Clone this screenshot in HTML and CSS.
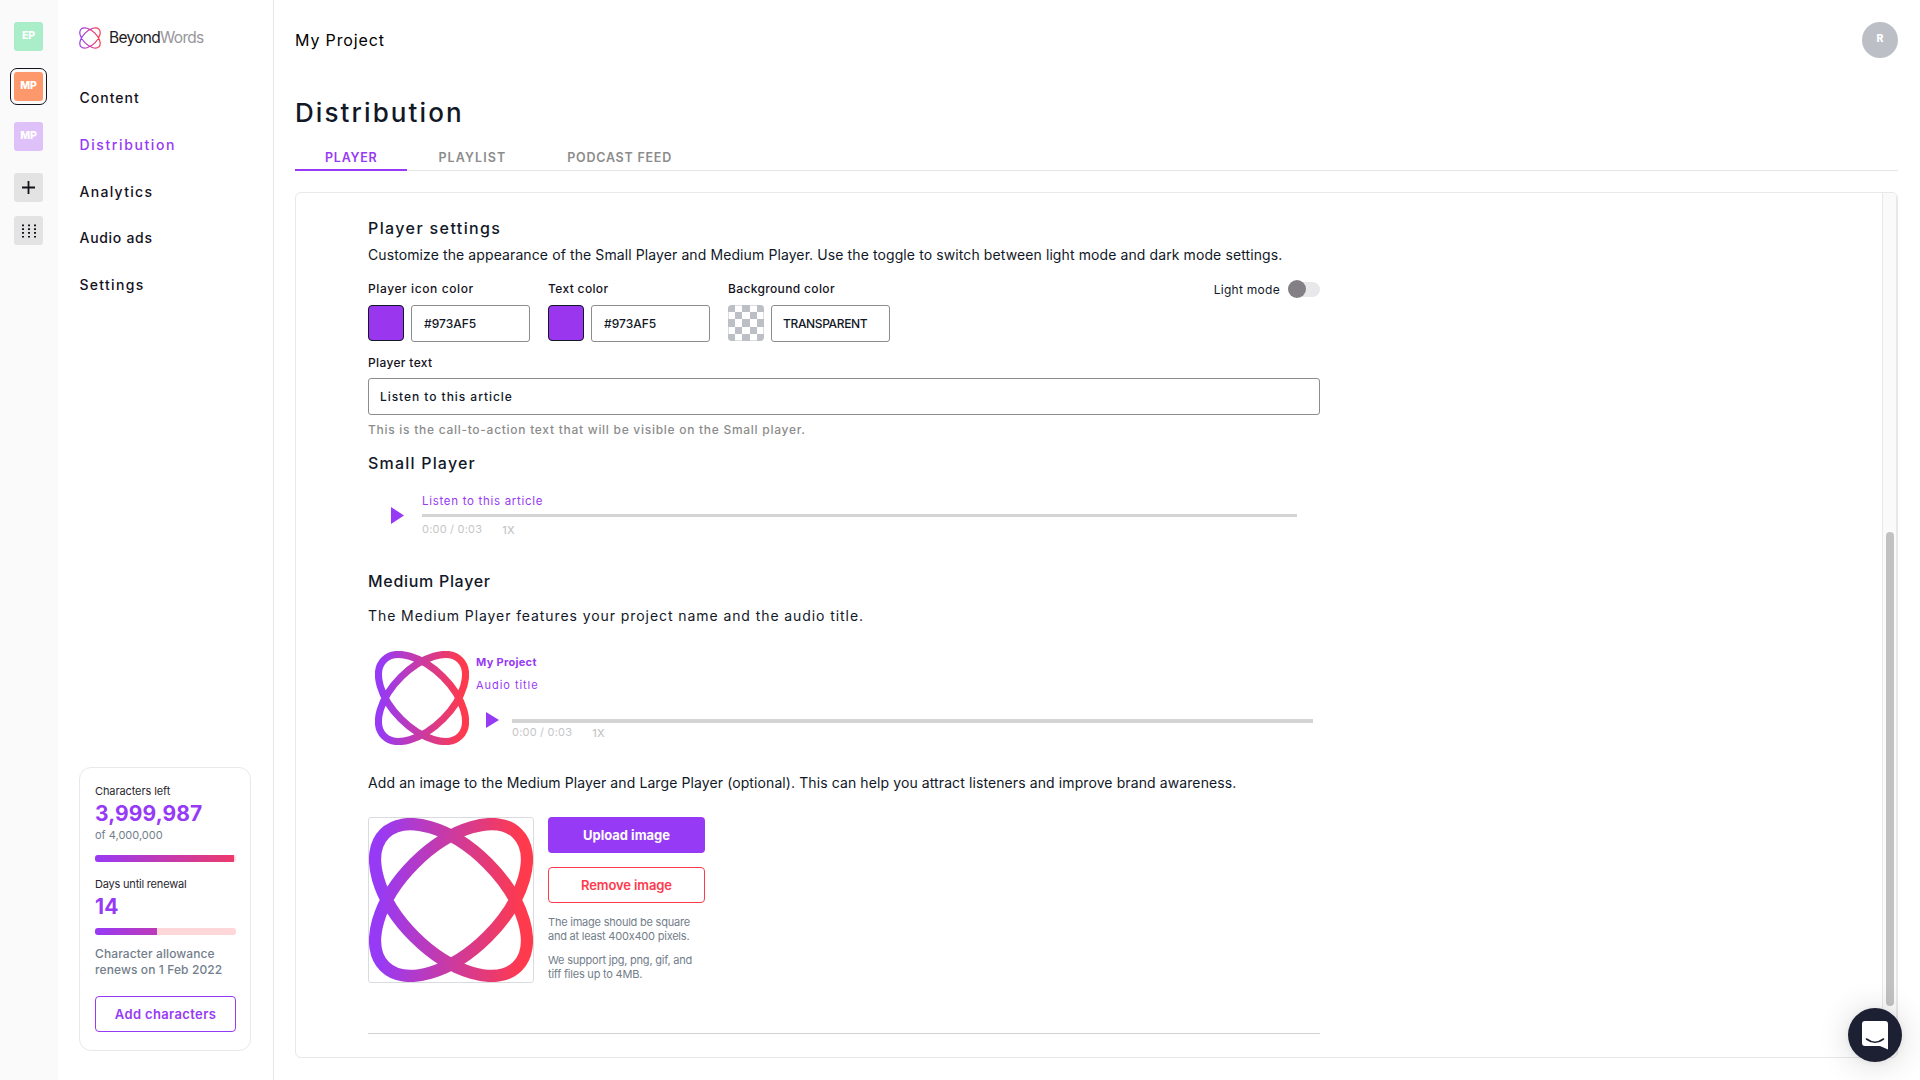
FILE: index.html
```html
<!DOCTYPE html>
<html lang="en">
<head>
  <meta charset="UTF-8" />
  <meta name="viewport" content="width=device-width, initial-scale=1.0" />
  <title>Distribution - BeyondWords</title>
  <link rel="stylesheet" href="styles.css">
</head>
<body>
  <svg class="defs" width="0" height="0">
    <linearGradient id="brand" gradientUnits="userSpaceOnUse" x1="10" y1="0" x2="154" y2="0">
      <stop offset="0" stop-color="#973af5" />
      <stop offset="1" stop-color="#ff3a4c" />
    </linearGradient>
    <symbol id="orbit" viewBox="0 0 164 164">
      <path d="M15.6 15.6A93.9 51.9 45 0 1 148.4 148.4A93.9 51.9 45 0 1 15.6 15.6ZM148.4 15.6A93.9 51.9 135 0 1 15.6 148.4A93.9 51.9 135 0 1 148.4 15.6Z" fill="none" stroke="url(#brand)" />
    </symbol>
  </svg>

  <div class="app">
    <aside class="rail">
      <a class="tile green">EP</a>
      <a class="tile orange active">MP</a>
      <a class="tile lilac">MP</a>
      <a class="tile grey add">
        <svg width="13" height="13" viewBox="0 0 13 13"><path d="M6.5 0V13M0 6.5H13" stroke="#15121d" stroke-width="1.8" /></svg>
      </a>
      <a class="tile grey apps">
        <svg width="14" height="14" viewBox="0 0 14 14"><path d="M1 .5V14M7 .5V14M13 .5V14" stroke="#15121d" stroke-width="2" stroke-dasharray="1.7 2.1" /></svg>
      </a>
    </aside>

    <nav class="sidebar">
      <div class="brand">
        <svg class="brand-icon" width="22" height="22"><use href="#orbit" /></svg>
        <span class="brand-name">Beyond<span class="light">Words</span></span>
      </div>
      <ul class="menu">
        <li><a class="content-link">Content</a></li>
        <li><a class="current">Distribution</a></li>
        <li><a>Analytics</a></li>
        <li><a class="ads-link">Audio ads</a></li>
        <li><a>Settings</a></li>
      </ul>

      <div class="usage">
        <div class="usage-label">Characters left</div>
        <div class="usage-value">3,999,987</div>
        <div class="usage-total">of 4,000,000</div>
        <div class="bar"><div class="bar-fill" style="width: 98.6%"></div></div>
        <div class="usage-label days">Days until renewal</div>
        <div class="usage-value">14</div>
        <div class="bar bar-days"><div class="bar-fill" style="width: 44%"></div></div>
        <p class="usage-note">Character allowance<br>renews on 1 Feb 2022</p>
        <button class="btn outline">Add characters</button>
      </div>
    </nav>

    <main class="main">
      <header class="topbar">
        <span class="project">My Project</span>
        <span class="avatar">R</span>
      </header>
      <h1>Distribution</h1>
      <div class="tabs">
        <a class="tab selected">PLAYER</a>
        <a class="tab playlist">PLAYLIST</a>
        <a class="tab">PODCAST FEED</a>
      </div>

      <section class="panel">
        <div class="content">
          <h2>Player settings</h2>
          <p class="intro">Customize the appearance of the Small Player and Medium Player. Use the toggle to switch between light mode and dark mode settings.</p>

          <div class="colors">
            <div class="color">
              <label class="icon-label">Player icon color</label>
              <div class="color-row"><span class="swatch"></span><input type="text" value="#973AF5"></div>
            </div>
            <div class="color">
              <label>Text color</label>
              <div class="color-row"><span class="swatch"></span><input type="text" value="#973AF5"></div>
            </div>
            <div class="color">
              <label>Background color</label>
              <div class="color-row">
                <span class="swatch clear">
                  <svg width="36" height="36" viewBox="0 0 5 5" shape-rendering="crispEdges"><path d="M0 .5H5M0 2.5H5M0 4.5H5" stroke="#bdbfc7" stroke-dasharray="1 1" /><path d="M1 1.5H5M1 3.5H5" stroke="#bdbfc7" stroke-dasharray="1 1" /></svg>
                </span>
                <input class="none" type="text" value="TRANSPARENT">
              </div>
            </div>
            <div class="mode">
              <span class="mode-label">Light mode</span>
              <span class="toggle"><span class="knob"></span></span>
            </div>
          </div>

          <label>Player text</label>
          <input class="wide" type="text" value="Listen to this article">
          <p class="hint">This is the call-to-action text that will be visible on the Small player.</p>

          <h2 class="small-title">Small Player</h2>
          <div class="player small">
            <svg class="play" width="13" height="17" viewBox="0 0 13 17"><path d="M0 0L13 8.5L0 17Z" fill="#973af5" /></svg>
            <div class="player-body">
              <div class="player-title">Listen to this article</div>
              <div class="track"></div>
              <div class="player-meta"><span class="time">0:00 / 0:03</span><span class="speed">1X</span></div>
            </div>
          </div>

          <h2 class="medium-title">Medium Player</h2>
          <p class="medium-text">The Medium Player features your project name and the audio title.</p>
          <div class="player medium">
            <svg class="cover" width="94" height="94"><use href="#orbit" /></svg>
            <div class="medium-body">
              <div class="medium-project">My Project</div>
              <div class="medium-audio">Audio title</div>
              <div class="medium-controls">
                <svg class="play" width="13" height="16" viewBox="0 0 13 17" preserveAspectRatio="none"><path d="M0 0L13 8.5L0 17Z" fill="#973af5" /></svg>
                <div class="player-body">
                  <div class="track"></div>
                  <div class="player-meta"><span class="time">0:00 / 0:03</span><span class="speed">1X</span></div>
                </div>
              </div>
            </div>
          </div>

          <p class="image-text">Add an image to the Medium Player and Large Player (optional). This can help you attract listeners and improve brand awareness.</p>
          <div class="upload">
            <div class="preview"><svg width="164" height="164"><use href="#orbit" /></svg></div>
            <div class="upload-side">
              <button class="btn solid">Upload image</button>
              <button class="btn danger">Remove image</button>
              <p class="upload-note">The image should be square<br>and at least 400x400 pixels.</p>
              <p class="upload-note">We support jpg, png, gif, and<br>tiff files up to 4MB.</p>
            </div>
          </div>
          <hr>
        </div>
        <div class="scrollbar"><div class="thumb"></div></div>
      </section>
    </main>
  </div>

  <div class="chat">
    <svg width="26" height="29" viewBox="0 0 26 29"><path d="M3 0H23A3 3 0 0 1 26 3V28.500L18 25H3A3 3 0 0 1 0 22V3A3 3 0 0 1 3 0Z" fill="#fff" /><path d="M4.500 18Q13 24.500 21.500 18" fill="none" stroke="#1d2033" stroke-width="1.6" stroke-linecap="round" /></svg>
  </div>
</body>
</html>
```
FILE: styles.css
```css
* {
  box-sizing: border-box;
}
body {
  margin: 0;
  font-family: Inter, Roboto, sans-serif;
  font-size: 12px;
  font-feature-settings: "calt" 0;
  color: #111827;
  background: #fff;
}
h1, h2, p, ul {
  margin: 0;
  padding: 0;
  font-weight: 500;
}
ul {
  list-style: none;
}
.defs {
  position: absolute;
}
.app {
  display: flex;
  height: 1080px;
  overflow: hidden;
}

/* workspace rail */
.rail {
  width: 58px;
  padding: 22px 0 0 14px;
  background: #fafafa;
}
.tile {
  display: flex;
  justify-content: center;
  width: 29px;
  height: 29px;
  margin-bottom: 21px;
  border-radius: 3px;
  color: #fff;
  font-size: 10.5px;
  font-weight: 800;
  line-height: 27px;
}
.green { background: #a9edc9; }
.orange { background: #fd986c; }
.lilac { background: #dfc1fa; }
.grey {
  align-items: center;
  background: #e3e3e3;
}
.active {
  outline: 1px solid #15121d;
  outline-offset: 3px;
}
.add {
  margin: 22px 0 14px;
}

/* sidebar */
.sidebar {
  display: flex;
  flex-direction: column;
  width: 216px;
  padding: 26px 22px 29px 21px;
  border-right: 1px solid #e6e6e6;
}
.brand {
  display: flex;
  align-items: center;
  height: 24px;
  gap: 8px;
  stroke-width: 9;
}
.brand-name {
  margin-top: -1px;
  font-size: 15.5px;
  letter-spacing: -0.7px;
  color: #1d1a24;
}
.brand-name .light {
  color: #98969b;
}
.menu {
  margin-top: 25px;
}
.menu li {
  height: 46.8px;
  padding-left: 0.5px;
  font-size: 14px;
  font-weight: 500;
  line-height: 46.8px;
  letter-spacing: 1.3px;
  color: #15121d;
}
.menu .content-link {
  letter-spacing: 1px;
}
.menu .ads-link {
  letter-spacing: 0.7px;
}
.menu .current {
  letter-spacing: 1.6px;
  color: #973af5;
}

.usage {
  height: 284px;
  margin-top: auto;
  padding: 15px 14px 0 15px;
  border: 1px solid #e8e8e8;
  border-radius: 12px;
}
.usage-label {
  font-size: 11px;
  line-height: 16px;
  letter-spacing: -0.1px;
  color: #2a2730;
}
.usage-value {
  font-size: 21px;
  font-weight: 700;
  line-height: 30px;
  letter-spacing: 0.1px;
  color: #973af5;
}
.usage-total {
  margin-top: -2px;
  font-size: 11px;
  line-height: 16px;
  color: #737e8a;
}
.bar {
  height: 7px;
  margin-top: 12px;
  overflow: hidden;
  border-radius: 3px;
  background: #ffd7d9;
}
.bar-fill {
  height: 100%;
  background: linear-gradient(90deg, #973af5, #ee3a6a 141px);
}
.days {
  margin-top: 14px;
  letter-spacing: -0.2px;
}
.bar-days {
  margin-top: 6px;
}
.usage-note {
  margin: 11px 0 18px;
  font-size: 12px;
  font-weight: 500;
  line-height: 16px;
  letter-spacing: 0.1px;
  color: #737e8a;
  white-space: nowrap;
}

.btn {
  display: block;
  width: 100%;
  height: 36px;
  padding: 0 0 1px;
  border-radius: 4px;
  font-family: inherit;
  font-size: 13px;
  font-weight: 600;
  background: #fff;
}
.outline {
  border: 1px solid #973af5;
  letter-spacing: 0.36px;
  color: #973af5;
}
.solid {
  border: 0;
  font-weight: 700;
  color: #fff;
  background: #973af5;
}
.danger {
  margin-top: 14px;
  border: 1px solid #ff3a4c;
  letter-spacing: -0.1px;
  color: #ff3a4c;
}

/* main column */
.main {
  flex: 1;
  padding: 22px 22px 22px 21px;
}
.topbar {
  display: flex;
  justify-content: space-between;
  align-items: center;
  height: 36px;
  font-size: 16px;
  color: #000;
}
.project {
  margin-top: -1px;
  letter-spacing: 0.86px;
}
.avatar {
  width: 36px;
  height: 36px;
  border-radius: 50%;
  background: #bdbfc7;
  color: #fff;
  font-size: 10.5px;
  font-weight: 800;
  line-height: 33px;
  text-align: center;
}
h1 {
  margin-top: 38px;
  font-size: 26px;
  line-height: 33px;
  letter-spacing: 2.1px;
}
.tabs {
  display: flex;
  height: 43px;
  margin-top: -1px;
  border-bottom: 1px solid #e6e6e6;
}
.tab {
  height: 43px;
  padding: 20px 30px 0;
  font-size: 12.5px;
  font-weight: 600;
  line-height: 19px;
  letter-spacing: 0.75px;
  color: #8c8c8c;
}
.playlist {
  margin-left: 1px;
  padding-right: 31px;
  letter-spacing: 1.1px;
}
.selected {
  border-bottom: 2px solid #973af5;
  color: #973af5;
}

.panel {
  display: flex;
  justify-content: space-between;
  height: 866px;
  margin-top: 21px;
  border: 1px solid #e8e8e8;
  border-radius: 6px;
  overflow: hidden;
}
.scrollbar {
  width: 15px;
  padding: 339px 0 0 3px;
  border-left: 1px solid #e8e8e8;
  border-right: 1px solid #e8e8e8;
  background: #fafafa;
}
.thumb {
  width: 8px;
  height: 474px;
  border-radius: 4px;
  background: #c1c1c1;
}
.content {
  width: 952px;
  margin-left: 72px;
  padding-top: 23px;
}
h2 {
  font-size: 16px;
  line-height: 24px;
  letter-spacing: 1.39px;
}
.intro, .medium-text, .image-text {
  font-size: 14px;
  font-weight: 400;
  line-height: 20px;
  letter-spacing: 0.1px;
  white-space: nowrap;
}
.intro {
  margin-top: 5px;
}
label {
  display: block;
  font-size: 12px;
  font-weight: 500;
  line-height: 16px;
  letter-spacing: 0.35px;
  color: #15121d;
}
.icon-label {
  letter-spacing: 0.6px;
}
.colors {
  display: flex;
  gap: 18px;
  height: 62px;
  margin: 16px 0 12px;
}
.color {
  width: 162px;
}
.color-row {
  display: flex;
  gap: 7px;
  margin-top: 8px;
}
.swatch {
  width: 36px;
  height: 36px;
  overflow: hidden;
  border: 1px solid #111827;
  border-radius: 4px;
  background: #9a36ee;
}
.clear {
  border: 0;
  background: #fff;
  box-shadow: inset 0 0 0 1px #dcdde1;
}
input {
  width: 119px;
  height: 37px;
  padding: 0 12px;
  border: 1px solid #8c8c8c;
  border-radius: 3px;
  font-family: inherit;
  font-size: 12px;
  font-weight: 500;
  color: #111827;
}
.none {
  padding-left: 11px;
  letter-spacing: -0.35px;
}
.wide {
  display: block;
  width: 952px;
  margin-top: 7px;
  padding: 0 11px;
  letter-spacing: 0.95px;
}
.mode {
  display: flex;
  gap: 8px;
  height: 18px;
  margin-left: auto;
  line-height: 18px;
  letter-spacing: 0.28px;
}
.toggle {
  width: 32px;
  height: 15px;
  margin-top: 1px;
  border-radius: 8px;
  background: #e8e7ea;
}
.knob {
  display: block;
  width: 18px;
  height: 18px;
  margin-top: -2px;
  border-radius: 50%;
  background: #838085;
}
.hint {
  margin-top: 7px;
  line-height: 16px;
  letter-spacing: 0.72px;
  color: #8c8c8c;
}
.small-title {
  margin-top: 13px;
  letter-spacing: 1.2px;
}

/* players */
.player {
  display: flex;
}
.small {
  height: 72px;
  padding: 19px 23px 0;
}
.small .play {
  margin-top: 13px;
}
.small .player-body {
  margin-left: 18px;
}
.player-body {
  flex: 1;
}
.player-title {
  height: 20px;
  font-size: 11.5px;
  line-height: 14px;
  letter-spacing: 0.7px;
  color: #973af5;
}
.track {
  height: 3px;
  background: #d4d4d4;
}
.player-meta {
  display: flex;
  gap: 20px;
  padding-top: 5px;
  font-size: 11px;
  line-height: 14px;
  letter-spacing: 0.2px;
  color: #c6c6c6;
}
.speed {
  padding-top: 1px;
  font-weight: 500;
}
.medium-title {
  margin-top: 22px;
  letter-spacing: 0.7px;
}
.medium-text {
  margin-top: 13px;
  letter-spacing: 0.92px;
}
.medium {
  margin-top: 25px;
  padding: 0 7px;
}
.medium-body {
  flex: 1;
  padding: 4px 0 0 7px;
  font-size: 11px;
  color: #973af5;
}
.medium-project {
  font-weight: 700;
  line-height: 14px;
  letter-spacing: 0.3px;
}
.medium-audio {
  margin-top: 9px;
  line-height: 14px;
  letter-spacing: 0.95px;
}
.medium-controls {
  display: flex;
  margin-top: 20px;
  padding-left: 10px;
}
.medium-controls .player-body {
  margin: 7px 0 -20px 13px;
}
.medium-controls .track {
  height: 4px;
}
.medium-controls .player-meta {
  padding-top: 2px;
}
.cover, .preview {
  stroke-width: 12.4;
}
.image-text {
  margin-top: 28px;
}

.upload {
  display: flex;
  gap: 14px;
  margin-top: 24px;
}
.preview {
  width: 166px;
  height: 166px;
  border: 1px solid #d9dbe0;
  border-radius: 3px;
}
.preview svg {
  display: block;
}
.upload-side {
  width: 157px;
}
.upload-note {
  margin-top: 10px;
  font-size: 11px;
  font-weight: 400;
  line-height: 14px;
  letter-spacing: -0.22px;
  color: #737e8a;
  white-space: nowrap;
}
.danger + .upload-note {
  margin-top: 12px;
}
hr {
  height: 1px;
  margin: 50px 0 0;
  border: 0;
  background: #d2d2d2;
}

.chat {
  position: absolute;
  left: 1848px;
  top: 1008px;
  width: 54px;
  height: 54px;
  padding: 13px 14px;
  border-radius: 50%;
  background: #1d2033;
  box-shadow: 0 1px 6px rgba(0, 0, 0, 0.06), 0 2px 32px rgba(0, 0, 0, 0.16);
}
```
